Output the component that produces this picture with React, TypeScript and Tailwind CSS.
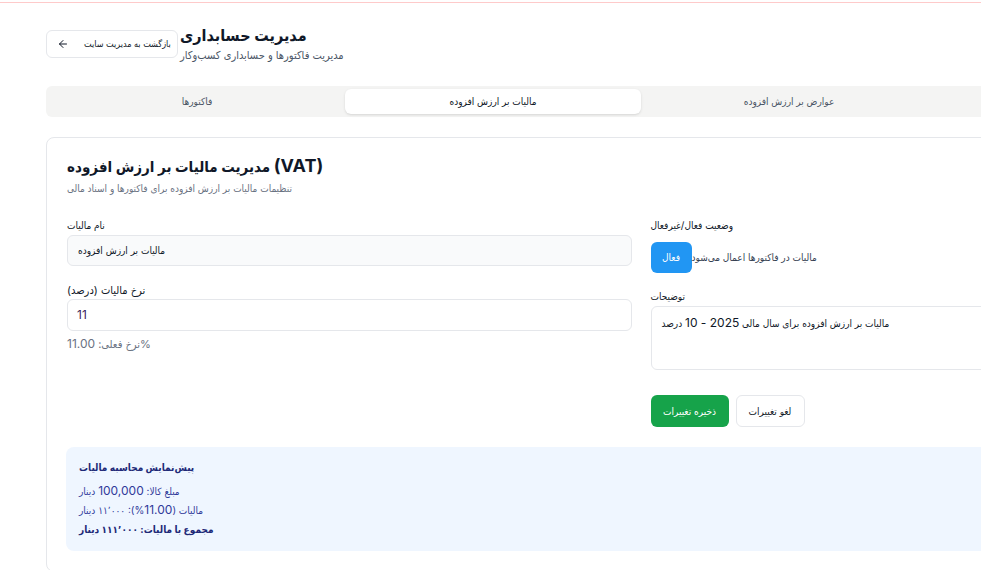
import { ArrowLeft } from "lucide-react";

const font = { fontFamily: '"Inter", "DejaVu Sans Condensed", "DejaVu Sans", sans-serif' };

export default function App() {
  const tabs = ["فاکتورها", "مالیات بر ارزش افزوده", "عوارض بر ارزش افزوده", ""];
  const active = 1;

  return (
    <div className="min-h-screen bg-white text-gray-900" style={font}>
      {/* top strip */}
      <div className="pt-[2px]">
        <div className="h-px bg-[#fecaca]" />
      </div>

      <div className="w-[1282px] px-[46px] pt-[20px]">
        {/* Header */}
        <div className="flex items-center gap-[2px]">
          <button className="mt-[2px] flex h-[28px] w-[132px] items-center gap-[15px] rounded-md border border-gray-200 bg-white pl-[10px] text-[9px] text-gray-900">
            <ArrowLeft className="h-3 w-3" strokeWidth={2} />
            بازگشت به مدیریت سایت
          </button>
          <div>
            <h1 className="text-base font-bold leading-6">مدیریت حسابداری</h1>
            <p className="text-[11px] leading-4 text-gray-600">مدیریت فاکتورها و حسابداری کسب‌وکار</p>
          </div>
        </div>

        {/* Tabs */}
        <div className="mt-[23px] grid h-[31px] grid-cols-4 rounded-md bg-[#f4f4f3] p-[3px]">
          {tabs.map((t, i) => (
            <div
              key={i}
              className={
                i === active
                  ? "flex items-center justify-center rounded-md bg-white text-[10px] text-gray-900 shadow-sm"
                  : "flex items-center justify-center text-[10px] text-gray-600"
              }
            >
              {t}
            </div>
          ))}
        </div>

        {/* VAT card */}
        <div className="mt-5 rounded-lg border border-gray-200 bg-white px-[20px] pb-5 pt-[17px]">
          <h2 className="h-6 text-[15px] font-bold leading-6">
            مدیریت مالیات بر ارزش افزوده <span className="text-lg leading-none">(VAT)</span>
          </h2>
          <p className="mt-[1px] text-[10px] leading-4 text-gray-500">تنظیمات مالیات بر ارزش افزوده برای فاکتورها و اسناد مالی</p>

          <div className="mt-[21px] grid grid-cols-2 gap-x-[19px]">
            {/* left column */}
            <div>
              <label className="block text-[10px] leading-4 text-gray-900">نام مالیات</label>
              <div className="mt-[2px] flex h-[31px] items-center rounded-md border border-gray-200 bg-gray-50 px-[10px] text-[10px]">
                مالیات بر ارزش افزوده
              </div>

              <label className="mt-[16px] block text-[11px] leading-4 text-gray-900">نرخ مالیات (درصد)</label>
              <div className="mt-[1px] flex h-[32px] items-center rounded-md border border-gray-200 bg-white px-[9px] text-xs text-[#3b1f5e]">
                11
              </div>
              <p className="mt-[5px] text-[11px] leading-4 text-gray-500">نرخ فعلی: <span className="text-xs">11.00</span>%</p>
            </div>

            {/* right column */}
            <div>
              <label className="block text-[10px] leading-4 text-gray-900">وضعیت فعال/غیرفعال</label>
              <div className="mt-[9px] flex items-center">
                <button className="flex h-[31px] w-[41px] items-center justify-center rounded-md bg-[#2196f3] text-[10px] text-white">
                  فعال
                </button>
                <span className="text-[10px] text-gray-700">مالیات در فاکتورها اعمال می‌شود</span>
              </div>

              <label className="mt-[15px] block text-[10px] leading-4 text-gray-900">توضیحات</label>
              <div className="mt-[2px] h-[64px] rounded-md border border-gray-200 bg-white px-[10px] py-[8px] text-[10px] leading-4">
                مالیات بر ارزش افزوده برای سال مالی <span className="text-xs">2025 - 10</span> درصد
              </div>

              <div className="mt-[25px] flex gap-[7px]">
                <button className="h-[32px] w-[78px] rounded-md bg-[#16a34a] text-[10px] text-white">ذخیره تغییرات</button>
                <button className="h-[32px] w-[69px] rounded-md border border-gray-200 bg-white text-[10px] text-gray-900">لغو تغییرات</button>
              </div>
            </div>
          </div>

          {/* Preview */}
          <div className="mt-[20px] -ml-px h-[104px] rounded-lg bg-[#eff6ff] px-[13px] pt-[12px]">
            <h3 className="text-[10px] font-bold leading-4 text-[#1e2a78]">پیش‌نمایش محاسبه مالیات</h3>
            <div className="mt-[8px] space-y-[2px] text-[10px] leading-[17px] text-[#2f3a9a]">
              <p>مبلغ کالا: <span className="text-xs">100,000</span> دینار</p>
              <p>مالیات (<span className="text-xs">11.00</span>%): ۱۱٬۰۰۰ دینار</p>
              <p className="font-bold text-[#1e2a78]">مجموع با مالیات: ۱۱۱٬۰۰۰ دینار</p>
            </div>
          </div>
        </div>
      </div>
    </div>
  );
}
